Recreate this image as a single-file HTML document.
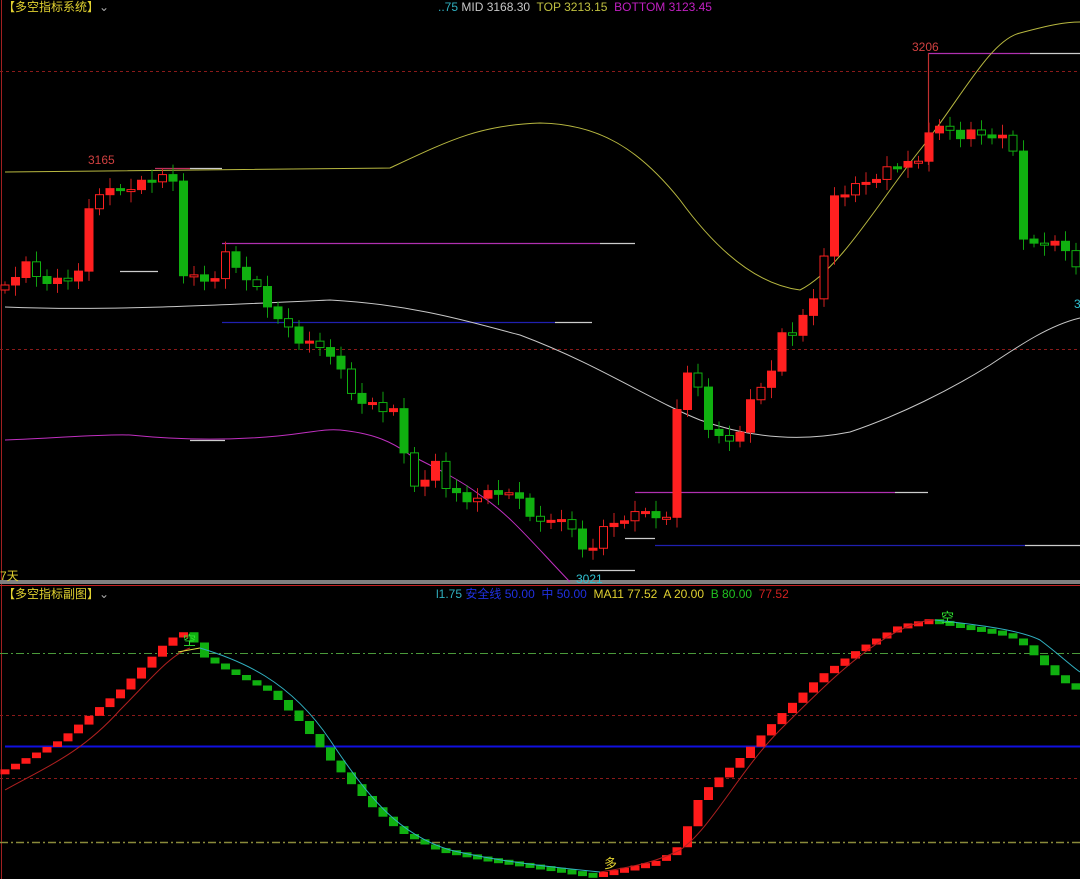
<!DOCTYPE html>
<html><head><meta charset="utf-8"><style>
html,body{margin:0;padding:0;background:#000;width:1080px;height:879px;overflow:hidden}
svg{position:absolute;left:0;top:0}
.t{position:absolute;font-family:"Liberation Sans","Noto Sans CJK SC",sans-serif;font-size:12px;white-space:nowrap;line-height:14px}
</style></head><body>
<svg id="s" width="1080" height="879" xmlns="http://www.w3.org/2000/svg">
<line x1="1.5" y1="0" x2="1.5" y2="879" stroke="#a02020" stroke-width="1"/>
<rect x="0" y="580" width="1080" height="4" fill="#808080"/>
<line x1="0" y1="585.5" x2="1080" y2="585.5" stroke="#c02020"/>
<line x1="0" y1="71.5" x2="1080" y2="71.5" stroke="#8a1a1a" stroke-dasharray="3,3"/>
<line x1="0" y1="349.5" x2="1080" y2="349.5" stroke="#8a1a1a" stroke-dasharray="3,3"/>
<line x1="0" y1="653.5" x2="1080" y2="653.5" stroke="#4a9a3a" stroke-dasharray="8,3,2,3"/>
<line x1="0" y1="715.5" x2="1080" y2="715.5" stroke="#8a1a1a" stroke-dasharray="3,3"/>
<line x1="5" y1="746.5" x2="1080" y2="746.5" stroke="#1010e0" stroke-width="2"/>
<line x1="0" y1="778.5" x2="1080" y2="778.5" stroke="#8a1a1a" stroke-dasharray="3,3"/>
<line x1="0" y1="842.5" x2="1080" y2="842.5" stroke="#8a8a3a" stroke-dasharray="8,3,2,3" stroke-width="1.5"/>
<g id="lv" stroke-width="1.2" fill="none">
<path d="M155 168.5H190" stroke="#c03060"/><path d="M190 168.5H222" stroke="#ccc"/>
<path d="M120 271.5H158" stroke="#ccc"/>
<path d="M222 243.5H600" stroke="#b030b0"/><path d="M600 243.5H635" stroke="#ccc"/>
<path d="M222 322.5H555" stroke="#2020b0"/><path d="M555 322.5H592" stroke="#ccc"/>
<path d="M190 440.5H225" stroke="#ccc"/>
<path d="M635 492.5H895" stroke="#b030b0"/><path d="M895 492.5H928" stroke="#ccc"/>
<path d="M655 545.5H1025" stroke="#2020b0"/><path d="M1025 545.5H1080" stroke="#ccc"/>
<path d="M928 53.5H1030" stroke="#b030b0"/><path d="M1030 53.5H1080" stroke="#ccc"/>
<path d="M928.5 53V165" stroke="#c03030"/>
<path d="M625 538.5H655" stroke="#ccc"/><path d="M590 570.5H635" stroke="#ccc"/>
</g>
<path d="M5 172 C100 172 200 170 390 168 C450 140 480 125 540 123 C600 124 640 150 680 200 C720 255 760 285 800 290 C840 270 880 200 920 150 C960 100 990 40 1020 33 C1050 25 1065 22 1080 22" stroke="#b8b840" fill="none"/>
<path d="M5 307 C100 311 200 306 330 300 C420 305 480 325 520 335 C600 365 650 400 700 420 C750 438 800 442 850 432 C900 415 950 390 990 365 C1020 345 1050 325 1080 318" stroke="#c8c8c8" fill="none"/>
<path d="M5 440 C60 438 100 434 130 435 C160 438 200 441 250 438 C300 436 320 428 340 430 C370 433 390 440 410 455 C440 470 460 480 480 495 C510 515 530 540 570 582" stroke="#c030c0" fill="none"/>
<g id="cd"></g>
<g id="sb"></g>
<path d="M5 790 C40 770 80 755 120 710 C150 680 170 655 190 648" stroke="#b02020" fill="none"/>
<path d="M178 652 L200 648" stroke="#e0e040" fill="none"/>
<path d="M200 648 C240 660 290 680 330 740 C370 800 400 835 450 850 C500 862 560 868 600 872" stroke="#30b0c0" fill="none"/>
<path d="M600 872 C640 866 660 860 680 850 C710 830 740 770 780 730 C820 690 860 650 900 630 C915 623 925 620 935 620" stroke="#b02020" fill="none"/>
<path d="M935 620 C980 625 1020 630 1040 640 C1060 655 1070 665 1080 672" stroke="#30b0c0" fill="none"/>
</svg>
<div class="t" style="left:3px;top:0;color:#e0d030">【多空指标系统】<span style="color:#aaa">⌄</span></div>
<div class="t" style="left:438px;top:0"><span style="color:#30b0c0">..75</span> <span style="color:#c8c8c8">MID 3168.30</span>&nbsp; <span style="color:#c0c040">TOP 3213.15</span>&nbsp; <span style="color:#c020c0">BOTTOM 3123.45</span></div>
<div class="t" style="left:88px;top:153px;color:#d04040">3165</div>
<div class="t" style="left:912px;top:40px;color:#d04040">3206</div>
<div class="t" style="left:576px;top:572px;color:#30c0d0">3021</div>
<div class="t" style="left:1074px;top:297px;color:#30c0d0">3</div>
<div class="t" style="left:0;top:569px;color:#e0d030">7天</div>
<div class="t" style="left:3px;top:587px;color:#e0d030">【多空指标副图】<span style="color:#aaa">⌄</span></div>
<div class="t" style="left:436px;top:587px"><span style="color:#30b0c0">l1.75</span> <span style="color:#2030e0">安全线 50.00</span>&nbsp; <span style="color:#2030e0">中 50.00</span>&nbsp; <span style="color:#e0d030">MA11 77.52</span>&nbsp; <span style="color:#e0d030">A 20.00</span>&nbsp; <span style="color:#20c020">B 80.00</span>&nbsp; <span style="color:#d02020">77.52</span></div>
<div class="t" style="left:183px;top:634px;color:#30e030;font-size:13px">空</div>
<div class="t" style="left:941px;top:611px;color:#30e030;font-size:13px">空</div>
<div class="t" style="left:604px;top:857px;color:#e0d030;font-size:13px">多</div>
<script>
(function(){
function interp(pts,x){for(var i=1;i<pts.length;i++){if(x<=pts[i][0]){var a=pts[i-1],b=pts[i];return a[1]+(b[1]-a[1])*(x-a[0])/(b[0]-a[0]);}}return pts[pts.length-1][1];}
var NS="http://www.w3.org/2000/svg";
function el(p,t,at){var e=document.createElementNS(NS,t);for(var k in at)e.setAttribute(k,at[k]);p.appendChild(e);return e;}
var P=[[0,290],[25,265],[50,285],[80,272],[92,190],[110,192],[140,185],[160,175],[172,172],[180,270],[200,280],[210,285],[225,255],[240,270],[265,300],[280,322],[300,340],[330,352],[350,390],[365,405],[395,410],[405,460],[420,495],[435,460],[450,495],[470,500],[500,490],[520,500],[540,525],[560,515],[580,545],[592,550],[610,518],[630,525],[640,500],[655,522],[668,515],[680,372],[700,385],[710,438],[725,438],[740,435],[755,385],[770,383],[780,330],[795,335],[805,315],[820,280],[835,195],[860,185],[880,175],[905,160],[920,165],[930,125],[945,130],[960,135],[975,133],[990,135],[1005,140],[1015,150],[1025,255],[1040,240],[1060,245],[1080,268]];
var cd=document.getElementById("cd");var prev=interp(P,0);
for(var i=0;i<103;i++){var x=5+i*10.5;var c=interp(P,x)+Math.sin(i*2.3)*4;var o=prev;prev=c;
var up=c<o;var col=up?"#ff2020":"#10b010";var ty=Math.min(o,c),h=Math.max(Math.abs(o-c),2);
var wk=6+Math.abs(Math.sin(i*1.7))*12;
el(cd,"line",{x1:x,x2:x,y1:ty-wk*0.6,y2:ty+h+wk*0.6,stroke:up?"#d02020":"#10a010"});
var hollow=(i%3==0);
el(cd,"rect",{x:x-4,y:ty,width:8,height:h,fill:hollow?"#000":col,stroke:col,"stroke-width":1});}
var S=[[0,772],[60,740],[120,690],[168,640],[188,630],[200,655],[230,672],[270,692],[300,722],[330,760],[370,805],[400,832],[430,847],[480,857],[540,866],[590,874],[610,871],[660,860],[680,845],[700,795],[740,758],[780,715],[820,676],[860,648],[900,625],[930,619],[960,625],[1000,632],[1020,642],[1060,680],[1080,692]];
var sb=document.getElementById("sb");var pv=interp(S,0);
for(var i=0;i<103;i++){var x=5+i*10.5;var v=interp(S,x);var ty=Math.min(pv,v),h=Math.max(Math.abs(v-pv),5);
var col=v<=pv?"#ff1a1a":"#10b010";el(sb,"rect",{x:x-4.5,y:ty,width:9,height:h,fill:col});pv=v;}
})();
</script>
</body></html>
